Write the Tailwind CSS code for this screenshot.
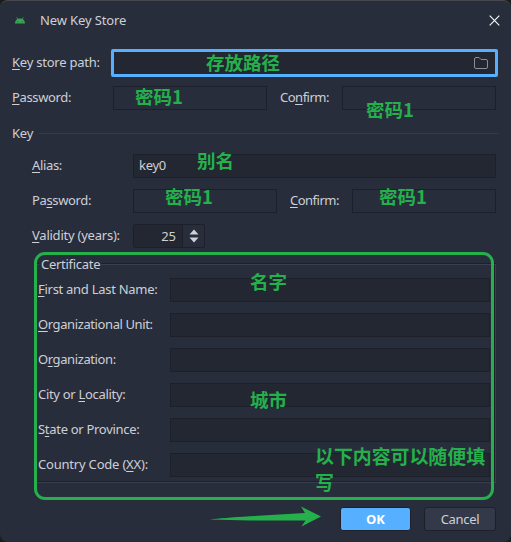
<!DOCTYPE html>
<html lang="zh">
<head>
<meta charset="utf-8">
<title>New Key Store</title>
<script src="https://cdn.jsdelivr.net/npm/@tailwindcss/browser@4"></script>
</head>
<body class="w-[511px] h-[542px] overflow-hidden bg-[#1c1c1f] font-['Noto_Sans','Noto_Sans_CJK_SC',sans-serif] text-[13px] leading-[20px] text-[#cdd0d6]">
<main class="relative w-[511px] h-[542px] rounded-[8px] border-t border-[#46484d] bg-[#282d3c] whitespace-nowrap">
  <header class="flex h-[48px] items-center pl-[15px] pr-[11px] -mt-[5px]">
    <svg class="w-[10px] h-[7px] shrink-0" viewBox="0 0 10 7"><path d="M0 6.500C.1 4.500 1 3 2.400 2.100L1.400.4l.5-.3 1.100 1.700a5.500 5.500 0 0 1 4 0L8.100.1l.5.3-1 1.700C9 3 9.900 4.500 10 6.500Z" fill="#3aa653"/><path d="M2.300 4.300h1v1h-1zM6.700 4.300h1v1h-1z" fill="#265b3d"/></svg>
    <h1 class="ml-[15px] tracking-[-0.13px]">New Key Store</h1>
    <svg class="ml-auto w-[11px] h-[11px]" viewBox="0 0 11 11"><path d="M.7.7l9.600 9.600M10.300.7L.7 10.300" stroke="#f3f4f6" stroke-width="1.200"/></svg>
  </header>

  <div class="flex h-[38px] items-center pl-[12px]">
    <span class="w-[99px] pb-[2px] tracking-[-0.23px]"><u class="underline-offset-2">K</u>ey store path:</span>
    <div class="flex h-[28px] w-[387px] items-center justify-end rounded-[2px] border-3 border-[#57b0ff] bg-[#232731] pr-[7px]">
      <svg class="w-[14px] h-[12px]" viewBox="0 0 14 12"><path d="M.5 10V2Q.5.500 2 .500h3l2 2h5q1.500 0 1.500 1.500v6q0 1.500-1.500 1.500H2Q.5 11.500.5 10Z" fill="none" stroke="#8b8e96"/></svg>
    </div>
  </div>
  <div class="flex h-[24px] items-center pl-[12px] mt-[4px]">
    <span class="w-[101px] pb-[2px] tracking-[-0.36px]"><u class="underline-offset-2">P</u>assword:</span>
    <div class="h-[24px] w-[154px] border border-[#1d202b]"></div>
    <span class="ml-[13px] w-[62px] pb-[2px] tracking-[-0.5px]">Co<u class="underline-offset-2">n</u>firm:</span>
    <div class="h-[24px] w-[154px] border border-[#1d202b]"></div>
  </div>

  <div class="mt-[13px] flex h-[20px] items-center pl-[12px]">
    <span class="w-[27px] tracking-[-0.2px]">Key</span><div class="h-px w-[460px] bg-[#363b4a]"></div>
  </div>
  <div class="mt-[11px] flex flex-col gap-[11px] pl-[32px]">
    <div class="flex h-[24px] items-center">
      <span class="w-[101px] pb-[2px] tracking-[-0.35px]"><u class="underline-offset-2">A</u>lias:</span>
      <div class="flex h-[24px] w-[363px] items-center border border-[#1d202b] bg-[#232731] pl-[5px] pb-[2px] tracking-[-0.3px]">key0</div>
    </div>
    <div class="flex h-[24px] items-center">
      <span class="w-[101px] pb-[2px] tracking-[-0.36px]">Pa<u class="underline-offset-2">s</u>sword:</span>
      <div class="h-[24px] w-[144px] border border-[#1d202b]"></div>
      <span class="ml-[13px] w-[62px] pb-[2px] tracking-[-0.5px]"><u class="underline-offset-2">C</u>onfirm:</span>
      <div class="h-[24px] w-[144px] border border-[#1d202b]"></div>
    </div>
    <div class="flex h-[24px] items-center">
      <span class="w-[101px] pb-[2px] tracking-[-0.23px]"><u class="underline-offset-2">V</u>alidity (years):</span>
      <div class="flex h-[24px] w-[72px] rounded-[2px] border border-[#1d202b]">
        <span class="flex w-[49px] items-center justify-end border-r border-[#1d202b] bg-[#232731] pr-[6px]">25</span>
        <svg class="m-auto w-[10px] h-[14px]" viewBox="0 0 10 14"><path d="M.5 5.500L5 .5l4.500 5zM.5 8.500h9L5 13.500z" fill="#cdd0d6"/></svg>
      </div>
    </div>
  </div>

  <section class="mt-[6px] pl-[36px]">
    <div class="flex h-[20px] items-center">
      <span class="w-[3px] h-[2px] border-t border-t-[#1d202b] border-b border-b-[#3a3f4d]"></span>
      <h2 class="ml-[2px] w-[60px] tracking-[-0.28px]">Certificate</h2>
      <span class="w-[395px] h-[2px] border-t border-t-[#1d202b] border-b border-b-[#3a3f4d]"></span>
    </div>
    <div class="-mt-[10px] flex h-[219px] w-[460px] flex-col gap-[11px] border-r border-b border-[#3a3f4d] pt-[14px] pl-[2px] shadow-[inset_-1px_-1px_0_#1d202b]">
      <div class="flex h-[24px] items-center"><span class="w-[132px] pb-[2px] tracking-[-0.28px]"><u class="underline-offset-2">F</u>irst and Last Name:</span><div class="h-[24px] w-[320px] border border-[#1d202b] bg-[#232731]"></div></div>
      <div class="flex h-[24px] items-center"><span class="w-[132px] pb-[2px] tracking-[-0.4px]"><u class="underline-offset-2">O</u>rganizational Unit:</span><div class="h-[24px] w-[320px] border border-[#1d202b] bg-[#232731]"></div></div>
      <div class="flex h-[24px] items-center"><span class="w-[132px] pb-[2px] tracking-[-0.4px]">O<u class="underline-offset-2">r</u>ganization:</span><div class="h-[24px] w-[320px] border border-[#1d202b] bg-[#232731]"></div></div>
      <div class="flex h-[24px] items-center"><span class="w-[132px] pb-[2px] tracking-[-0.3px]">City or <u class="underline-offset-2">L</u>ocality:</span><div class="h-[24px] w-[320px] border border-[#1d202b] bg-[#232731]"></div></div>
      <div class="flex h-[24px] items-center"><span class="w-[132px] pb-[2px] tracking-[-0.3px]">S<u class="underline-offset-2">t</u>ate or Province:</span><div class="h-[24px] w-[320px] border border-[#1d202b] bg-[#232731]"></div></div>
      <div class="flex h-[24px] items-center"><span class="w-[132px] pb-[2px] tracking-[-0.2px]">Country Code (<u class="underline-offset-2">X</u>X):</span><div class="h-[24px] w-[320px] border border-[#1d202b] bg-[#232731]"></div></div>
    </div>
  </section>

  <footer class="mt-[24px] flex justify-end gap-[13px] pr-[15px]">
    <button class="h-[24px] w-[71px] rounded-[3px] border border-[#1d202b] bg-[#57b0ff] font-['Open_Sans'] font-bold text-white">OK</button>
    <button class="h-[24px] w-[72px] rounded-[3px] border border-[#1d202b] bg-[#333949] tracking-[-0.3px]">Cancel</button>
  </footer>

  <!-- Hand-drawn notes over the dialog -->
  <div class="absolute -top-px left-0 w-[511px] h-[542px] font-['Noto_Sans_CJK_SC',sans-serif] text-[18.5px] leading-[26px] font-bold text-[#24b14c]">
    <div class="absolute left-[34px] top-[252px] h-[248px] w-[460px] rounded-[11px] border-3 border-[#24b14c]"></div>
    <span class="absolute left-[206px] top-[49px]">存放路径</span>
    <span class="absolute left-[135px] top-[83px]">密码1</span>
    <span class="absolute left-[366px] top-[96px]">密码1</span>
    <span class="absolute left-[197px] top-[147px]">别名</span>
    <span class="absolute left-[165px] top-[183px]">密码1</span>
    <span class="absolute left-[379px] top-[183px]">密码1</span>
    <span class="absolute left-[250px] top-[268px]">名字</span>
    <span class="absolute left-[250px] top-[386px]">城市</span>
    <span class="absolute left-[315px] top-[443px] text-[18.9px]">以下内容可以随便填<br>写</span>
    <svg class="absolute left-[210px] top-[506px] w-[112px] h-[22px]" viewBox="0 0 112 22"><path d="M0 13.500Q12 12 40 10.300L95 7 91 .5 111 10.500 91.500 20.500 95.500 14.600 40 14.400Z" fill="#24b14c"/></svg>
  </div>
</main>
</body>
</html>
